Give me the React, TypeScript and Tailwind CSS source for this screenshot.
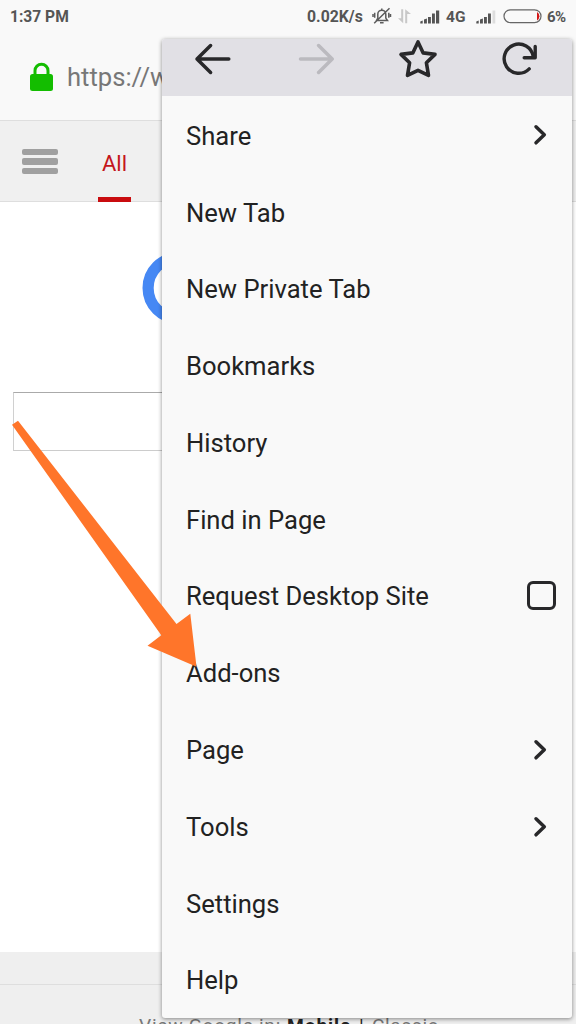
import React from "react";

type Trailing = "chevron" | "checkbox";

const items: { label: string; trailing?: Trailing }[] = [
  { label: "Share", trailing: "chevron" },
  { label: "New Tab" },
  { label: "New Private Tab" },
  { label: "Bookmarks" },
  { label: "History" },
  { label: "Find in Page" },
  { label: "Request Desktop Site", trailing: "checkbox" },
  { label: "Add-ons" },
  { label: "Page", trailing: "chevron" },
  { label: "Tools", trailing: "chevron" },
  { label: "Settings" },
  { label: "Help" },
];

function StatusBar() {
  return (
    <div className="flex h-8 items-center justify-between pr-[9px] pl-[10px] text-[16px] font-bold text-[#555]">
      <span className="w-[60px] pt-[3px] whitespace-nowrap text-[15.6px]">1:37 PM</span>
      <div className="flex items-center">
        <span className="w-[65px] pt-[2px] whitespace-nowrap text-[15.8px]">0.02K/s</span>
        <svg className="h-5 w-5" viewBox="0 0 20 20" fill="none" stroke="#5c5c5c" strokeWidth="1.5">
          <path d="M4.5 14.5h11l-1.7-2.4V8.2a4 4 0 0 0-8 0v3.9zM8 16.7h3.6M9.8 4V2.5M2.2 17.2 17.5 2.2" />
          <path d="M2.7 6.8v5M1 8v3M16.8 6.8v5M18.5 8v3" />
        </svg>
        <svg className="ml-[5px] h-5 w-[15px]" viewBox="0 0 15 20" fill="#c8c8c8">
          <path d="M4.2 3.3h2v14L1 12.2h3.2zM8.2 17.3h2V8H14L8.2 3.3z" />
        </svg>
        <svg className="ml-2 h-5 w-5" viewBox="0 0 20 20" fill="#555">
          <path d="M.3 17.5v-2l2.4-1v3zM4 17.5V13.5l2.9-1v5zM8 17.5V11h2.9v6.5zM12 17.5V7.5h2.9v10zM16 17.5V4.5h3.2v13z" />
        </svg>
        <span className="ml-[6px] w-[21px] pt-[3px] text-[15.5px]">4G</span>
        <svg className="ml-[9px] h-5 w-5" viewBox="0 0 20 20" fill="#555">
          <path d="M.3 17.5v-2l2.4-1v3zM4 17.5V13.5l2.9-1v5zM8 17.5V11h2.9v6.5zM12 17.5V7.5h2.9v10z" />
          <path d="M16.5 17.5V4.5h2.8v13z" fill="#ddd" />
        </svg>
        <svg className="ml-[7px] h-5 w-10" viewBox="0 0 40 20" fill="none">
          <rect x="1" y="3.8" width="37" height="12.8" rx="6.4" stroke="#666" strokeWidth="1.2" />
          <path d="M34 6q2.4 1.4 2.4 4.2T34 14.4z" fill="#d31717" />
        </svg>
        <span className="ml-[4px] w-[20px] pt-[2px] text-[15px] tracking-[-0.6px]">6%</span>
      </div>
    </div>
  );
}

function BrowserPage() {
  return (
    <div className="flex h-full flex-col">
      <div className="h-[121px] shrink-0 border-b border-[#dedede] bg-[#f9f9f9]">
        <StatusBar />
        <div className="flex h-[89px] items-center pl-[29px]">
          <svg className="h-[30px] w-[25px]" viewBox="0 0 25 30">
            <path d="M6 14V8.7a6.5 6.5 0 0 1 13 0V14" fill="none" stroke="#13bd00" strokeWidth="3" />
            <rect x="1" y="12" width="23" height="17" rx="2.5" fill="#13bd00" />
          </svg>
          <span className="ml-[13px] pt-[2px] text-[25.6px] whitespace-nowrap text-[#777]">https://www.google</span>
        </div>
      </div>
      <div className="flex h-[81px] shrink-0 border-b border-[#dedede] bg-[#f0f0f0]">
        <div className="mt-[27.5px] ml-[22px] flex w-9 flex-col gap-[3px]">
          <div className="h-[6.5px] rounded-[2px] bg-[#a0a0a0]" />
          <div className="h-[6.5px] rounded-[2px] bg-[#a0a0a0]" />
          <div className="h-[6.5px] rounded-[2px] bg-[#a0a0a0]" />
        </div>
        <div className="ml-[40px] flex h-[81px] w-[33px] flex-col items-center justify-between border-b-[5px] border-[#c90c0f] pt-[28px] text-[22px] leading-[30px] text-[#c4161c]">
          All
        </div>
      </div>
      <div className="flex h-[750px] shrink-0 flex-col bg-white">
        <svg className="mt-[50px] ml-[142px] h-[73px] w-[73px] shrink-0" viewBox="0 0 73 73">
          <circle cx="36.5" cy="36" r="30.4" fill="none" stroke="#4688f4" strokeWidth="11.2" />
        </svg>
        <div className="mx-[13px] mt-[67px] h-[59px] border border-t-[#aaa] border-r-[#d0d0d0] border-b-[#ccc] border-l-[#d0d0d0]" />
      </div>
      <div className="flex h-[72px] shrink-0 flex-col overflow-hidden bg-[#efefef]">
        <div className="h-[32px] shrink-0" />
        <div className="flex shrink-0 border-t border-[#dedede] pt-[28px] pl-[139px] text-[19.2px] leading-[26px] whitespace-nowrap text-[#777]">
          <span className="w-[148px] tracking-[0.7px]">View Google in:</span>
          <b className="w-[72px] tracking-[0.9px] text-[#222]">Mobile</b>
          <span className="w-[13px] text-[#222]">|</span>
          <span className="tracking-[0.6px]">Classic</span>
        </div>
      </div>
    </div>
  );
}

function MenuToolbar() {
  return (
    <div className="flex h-[57.5px] shrink-0 items-start bg-[#e1e0e5] text-[#28282a]">
      <svg className="mt-[2px] ml-[31px] h-9 w-10" viewBox="0 0 40 36" fill="none" stroke="currentColor" strokeWidth="3.5" strokeLinecap="round" strokeLinejoin="round">
        <path d="M35.8 18H4M17.6 4.5 4 18l13.6 13.5" />
      </svg>
      <svg className="mt-[2px] ml-[61px] h-9 w-10 text-[#bbbabf]" viewBox="0 0 40 36" fill="none" stroke="currentColor" strokeWidth="3.5" strokeLinecap="round" strokeLinejoin="round">
        <path d="M6.5 18h31.7M24.6 4.5 38.2 18 24.6 31.5" />
      </svg>
      <svg className="ml-[64px] h-10 w-10" viewBox="0 0 40 40" fill="none" stroke="currentColor" strokeWidth="3.6" strokeLinejoin="round">
        <path d="m20 2.9 5.2 11 11.8 1.5-8.6 8.4 2.1 12.6L20 31.3 9.5 36.4l2.1-12.6L3 15.4l11.8-1.5z" />
      </svg>
      <svg className="ml-[62px] h-10 w-10" viewBox="0 0 40 40" fill="none" stroke="currentColor" strokeWidth="3.4" strokeLinecap="round" strokeLinejoin="round">
        <path d="M29.2 29.9A14.6 14.6 0 1 1 33.2 17.5" />
        <path d="M35.2 7.5v11.3H24.2" />
      </svg>
    </div>
  );
}

function Menu() {
  return (
    <div className="absolute top-[38.5px] left-[162px] flex h-[979.5px] w-[410px] flex-col overflow-hidden rounded-[3px] bg-[#f9f9f9] shadow-[0_1px_4px_rgba(0,0,0,0.45)]">
      <MenuToolbar />
      <div className="flex flex-col">
        {items.map((item) => (
          <div key={item.label} className="flex h-[76.8px] items-center justify-between pr-[16px] pl-[24px] text-[25.6px] text-[#222]">
            <span className="pt-[3px] whitespace-nowrap">{item.label}</span>
            {item.trailing === "chevron" && (
              <svg className="mr-[7px] h-6 w-[18px]" viewBox="0 0 18 24" fill="none" stroke="#28282a" strokeWidth="3.5" strokeLinecap="round" strokeLinejoin="round">
                <path d="m5 4.8 8.3 8L5 20.8" />
              </svg>
            )}
            {item.trailing === "checkbox" && <span className="h-[29px] w-[29px] rounded-[6px] border-[3px] border-[#28282a]" />}
          </div>
        ))}
      </div>
    </div>
  );
}

export default function App() {
  return (
    <div className="relative h-[1024px] w-[576px] overflow-hidden bg-white font-['Roboto',sans-serif]">
      <BrowserPage />
      <Menu />
      <svg className="pointer-events-none absolute top-[410px] left-0 h-[270px] w-[210px]" viewBox="0 410 210 270">
        <path d="M18 420.8 176.5 624l13.8-10.3 6.2 53-49-21 13.8-10.4L12 424.7z" fill="#ff752a" />
      </svg>
    </div>
  );
}
